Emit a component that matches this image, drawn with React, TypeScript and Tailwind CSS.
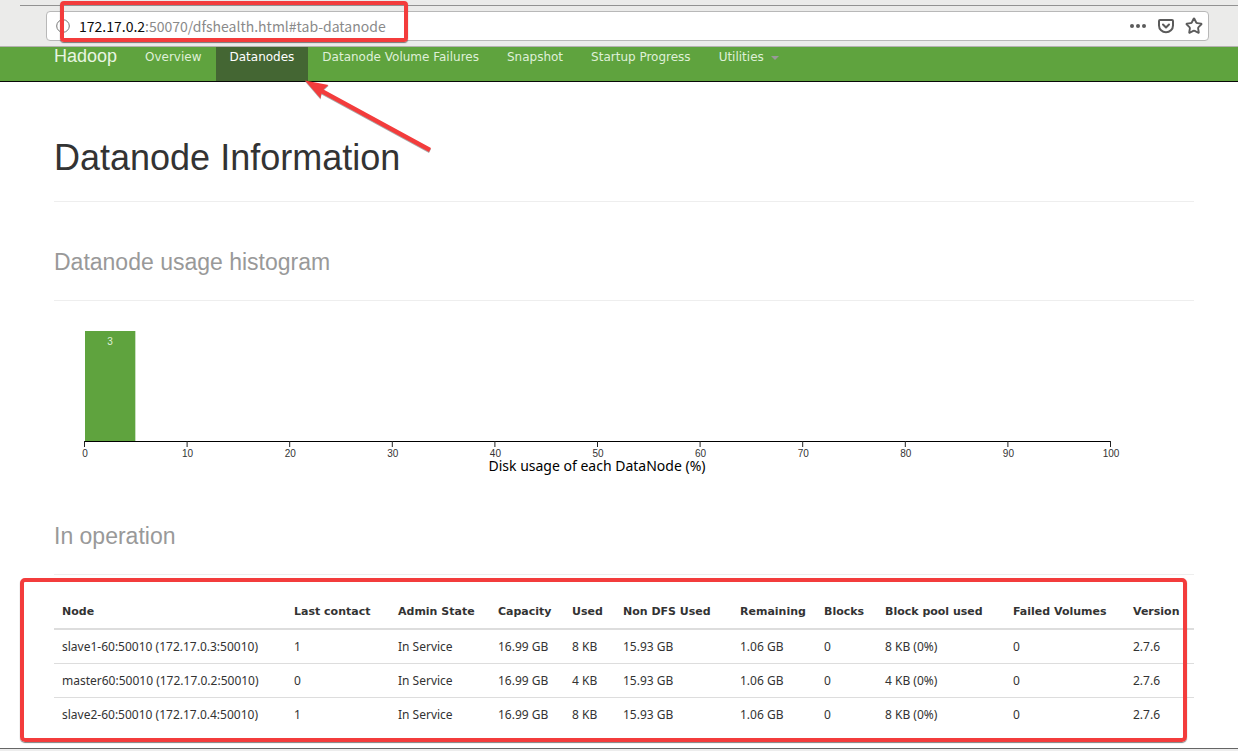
import { Star } from 'lucide-react';

const NAV = ['Overview', 'Datanodes', 'Datanode Volume Failures', 'Snapshot', 'Startup Progress'];

const COLUMNS = [
  { label: 'Node', width: 'w-[232px]' },
  { label: 'Last contact', width: 'w-[104px]' },
  { label: 'Admin State', width: 'w-[100px]' },
  { label: 'Capacity', width: 'w-[74px]' },
  { label: 'Used', width: 'w-[51px]' },
  { label: 'Non DFS Used', width: 'w-[117px]' },
  { label: 'Remaining', width: 'w-[84px]' },
  { label: 'Blocks', width: 'w-[61px]' },
  { label: 'Block pool used', width: 'w-[128px]' },
  { label: 'Failed Volumes', width: 'w-[120px]' },
  { label: 'Version', width: 'w-[69px]' },
];

const NODES = [
  ['slave1-60:50010 (172.17.0.3:50010)', '1', 'In Service', '16.99 GB', '8 KB', '15.93 GB', '1.06 GB', '0', '8 KB (0%)', '0', '2.7.6'],
  ['master60:50010 (172.17.0.2:50010)', '0', 'In Service', '16.99 GB', '4 KB', '15.93 GB', '1.06 GB', '0', '4 KB (0%)', '0', '2.7.6'],
  ['slave2-60:50010 (172.17.0.4:50010)', '1', 'In Service', '16.99 GB', '8 KB', '15.93 GB', '1.06 GB', '0', '8 KB (0%)', '0', '2.7.6'],
];

const PocketIcon = () => (
  <svg viewBox="0 0 16 16" width="16" height="16" fill="none" stroke="#5b5b5b" strokeWidth="2" strokeLinecap="round" strokeLinejoin="round">
    <path d="M2 2h12a1 1 0 0 1 1 1v4.5a7 6.8 0 0 1-14 0V3a1 1 0 0 1 1-1z" />
    <path d="M5 6.5l3 3 3-3" />
  </svg>
);

const BrowserBar = () => (
  <header className="relative bg-[#ebebea] border-b border-[#b4b2b0] pt-[5px] pb-[5px]">
    <div className="ml-5 h-[6px] border-t border-[#929292]" />
    <div className="ml-[46px] mr-[29px] h-[30px] flex items-center bg-white border border-[#b8b8b8] rounded-[4px] pl-[9px] pr-[5px]">
      <svg viewBox="0 0 14 14" width="14" height="14" fill="none" stroke="#777" className="shrink-0">
        <circle cx="7" cy="7" r="6.3" />
      </svg>
      <div className="ml-[9px] flex-1 text-[14px] leading-5 text-[#8a8a8a] font-['Noto_Sans_CJK_SC',sans-serif]">
        <span className="text-[#0c0c0d]">172.17.0.2</span>:50070/dfshealth.html#tab-datanode
      </div>
      <div className="flex items-center gap-[11px]">
        <button aria-label="Page actions">
          <svg viewBox="0 0 18 16" width="18" height="16" fill="#5b5b5b">
            <circle cx="3" cy="8" r="2" /><circle cx="9" cy="8" r="2" /><circle cx="15" cy="8" r="2" />
          </svg>
        </button>
        <button aria-label="Save to Pocket"><PocketIcon /></button>
        <button aria-label="Bookmark this page"><Star size={18} stroke="#5b5b5b" strokeWidth={2.5} /></button>
      </div>
    </div>
    <div className="absolute left-[60px] top-px w-[348px] h-[41px] border-4 border-[#f33c3c] rounded-[4px] shadow-[0_1px_1px_#00000080]" />
  </header>
);

const NavBar = () => (
  <nav className="relative flex h-[35px] bg-[#5fa33e] border-b border-[#080808] pl-[54px] font-['DejaVu_Sans',sans-serif] text-[12px] leading-5 text-[#dff0d8]">
    <a href="#overview" className="mr-[14px] w-[63px] font-['Liberation_Sans',sans-serif] text-[18px] leading-[18px] text-[#e8f5e1]">Hadoop</a>
    {NAV.map(label => (
      <a key={label} href="#tab" className={label === 'Datanodes' ? 'px-[14px] bg-[#446633] text-white' : 'px-[14px]'}>{label}</a>
    ))}
    <a href="#utilities" className="px-[14px] flex gap-[7px]">
      Utilities
      <span className="mt-[9px] h-0 border-x-4 border-t-4 border-x-transparent border-t-[#999]" />
    </a>
    <svg viewBox="0 0 128 74" width="128" height="74" className="absolute left-[305px] top-[33px]">
      <path d="M0 0.5L23.5 5L18.5 9.5L126 68L124 72L16.5 13.5L15.5 18.5Z" fill="#aaa" transform="translate(0 1)" />
      <path d="M0 0.5L23.5 5L18.5 9.5L126 68L124 72L16.5 13.5L15.5 18.5Z" fill="#f33c3c" />
    </svg>
  </nav>
);

const SectionTitle = ({ children }: { children: string }) => (
  <h2 className="border-b border-[#eee] text-[23px] leading-[26px] pb-[25px] text-[#999]">{children}</h2>
);

const Histogram = () => (
  <svg viewBox="0 0 1140 146" className="mt-[30px] w-full" role="img" aria-label="Disk usage of each DataNode">
    <rect x="31" y="0" width="50" height="110" fill="#5fa33e" />
    <rect x="81" y="0" width="1" height="110" fill="#c9dfc0" />
    <text x="56" y="14" fill="#dff0d8" fontSize="10" textAnchor="middle">3</text>
    <path d="M30.5 116V110.5H1056.5V116" fill="none" stroke="#000" />
    {Array.from({ length: 11 }, (_, i) => (
      <g key={i}>
        <line x1={30.5 + i * 102.6} x2={30.5 + i * 102.6} y1="110" y2="116" stroke="#222" />
        <text x={31 + i * 102.6} y="126" fontSize="10" fill="#333" textAnchor="middle">{i * 10}</text>
      </g>
    ))}
    <text x="543" y="140" fontSize="14" fill="#000" textAnchor="middle" className="font-['Noto_Sans',sans-serif]">Disk usage of each DataNode (%)</text>
  </svg>
);

const NodeTable = () => (
  <div className="relative pt-5">
    <table className="w-full table-fixed border-collapse text-left text-[11px] leading-[17px] text-[#333]">
      <thead className="border-b-2 border-[#ddd] font-['DejaVu_Sans',sans-serif]">
        <tr>
          {COLUMNS.map(c => <th key={c.label} className={`${c.width} pl-2 py-2 font-bold whitespace-nowrap`}>{c.label}</th>)}
        </tr>
      </thead>
      <tbody className="font-['Noto_Sans',sans-serif] text-[12px]">
        {NODES.map(row => (
          <tr key={row[0]} className="border-b border-[#ddd] last:border-b-0">
            {row.map((cell, i) => <td key={i} className="pl-2 py-2 whitespace-nowrap">{cell}</td>)}
          </tr>
        ))}
      </tbody>
    </table>
    <div className="absolute top-[3px] -bottom-[11px] -left-[34px] right-[7px] border-4 border-[#f33c3c] rounded-[5px] shadow-[0_1px_1px_#00000080] pointer-events-none" />
  </div>
);

export default function App() {
  return (
    <div className="min-h-screen flex flex-col bg-white font-['Liberation_Sans',Arial,sans-serif]">
      <BrowserBar />
      <NavBar />
      <main className="flex-1 pl-[54px] pr-11 pt-[56px] pb-4">
        <h1 className="border-b border-[#eee] text-[36px] leading-10 pb-[23px] text-[#333]">Datanode Information</h1>
        <div className="mt-[47px]"><SectionTitle>Datanode usage histogram</SectionTitle></div>
        <Histogram />
        <div className="mt-[46px]"><SectionTitle>In operation</SectionTitle></div>
        <NodeTable />
      </main>
      <footer className="h-[3px] bg-[#ededed] border-t border-[#666]" />
    </div>
  );
}
